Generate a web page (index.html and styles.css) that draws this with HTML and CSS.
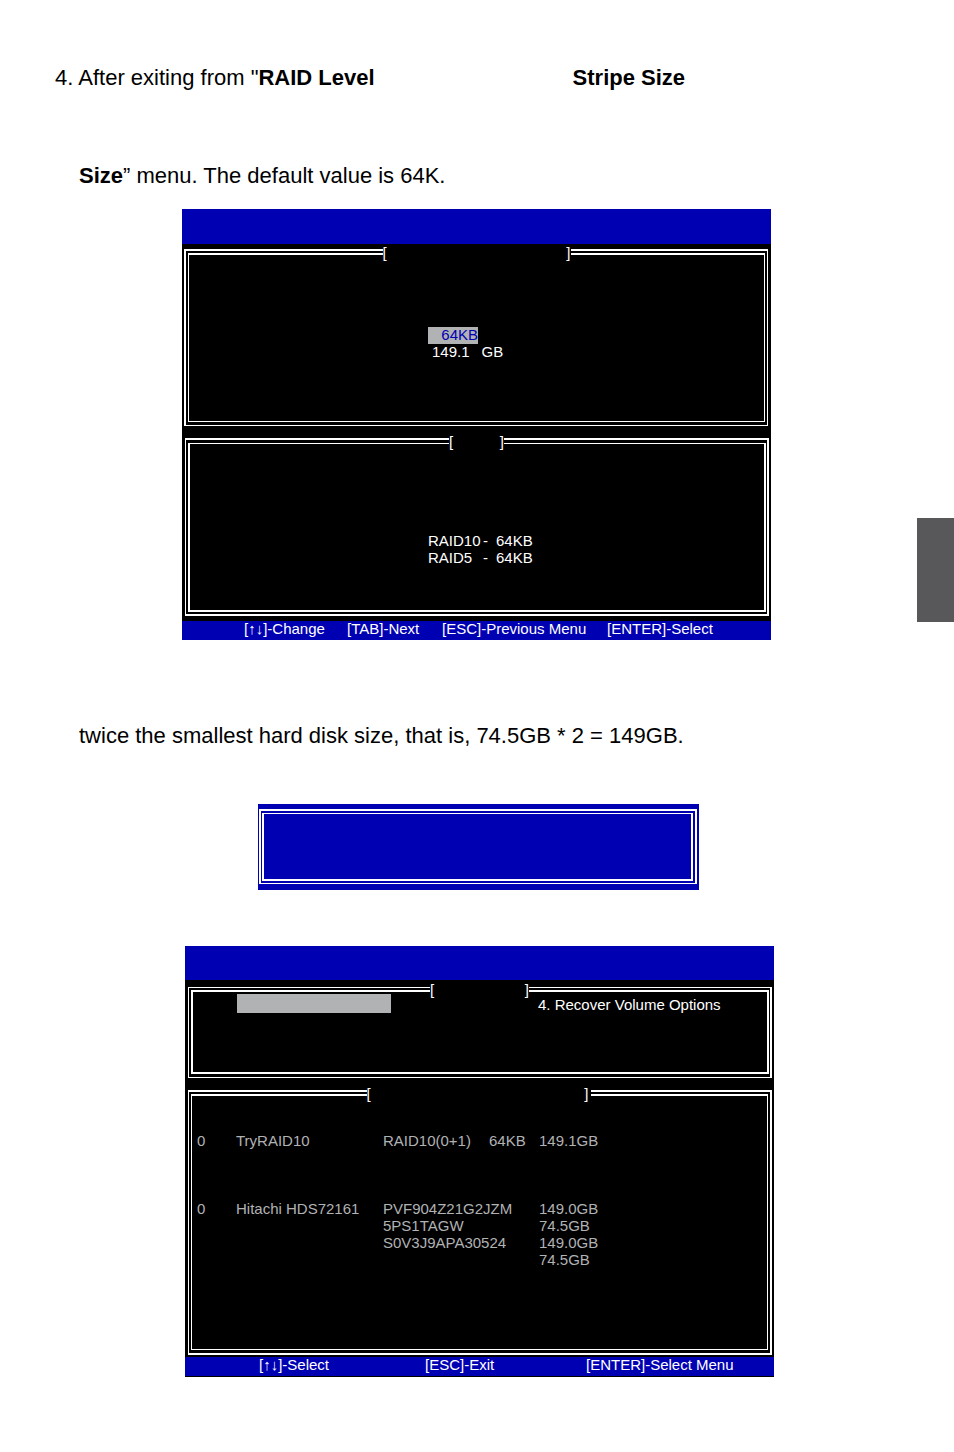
FILE: index.html
```html
<!DOCTYPE html>
<html lang="en">
<head>
  <meta charset="UTF-8">
  <title>RAID Stripe Size</title>
  <link rel="stylesheet" href="styles.css">
</head>
<body>
  <main class="page">
    <p class="step">4. After exiting from "<b>RAID Level</b><b class="menu-name">Stripe Size</b></p>
    <p class="step continued"><b>Size</b>” menu. The default value is 64K.</p>

    <section class="screen">
      <div class="screen-header"></div>
      <div class="frame create">
        <div class="caption"><span>[</span><span>]</span></div>
        <div class="inner">
          <div class="field selected">64KB</div>
          <div class="field"><span>149.1</span><span>GB</span></div>
        </div>
      </div>
      <div class="frame help">
        <div class="caption"><span>[</span><span>]</span></div>
        <div class="inner">
          <div class="level"><span>RAID10</span><span>-</span><span>64KB</span></div>
          <div class="level"><span>RAID5</span><span>-</span><span>64KB</span></div>
        </div>
      </div>
      <div class="keys keys-change">
        <span>[↑↓]-Change</span>
        <span>[TAB]-Next</span>
        <span>[ESC]-Previous Menu</span>
        <span>[ENTER]-Select</span>
      </div>
    </section>

    <p class="step note">twice the smallest hard disk size, that is, 74.5GB * 2 = 149GB.</p>

    <div class="popup-row">
      <div class="popup">
        <div class="frame confirm">
          <div class="inner"></div>
        </div>
      </div>
    </div>

    <div class="main-row">
      <section class="screen main-screen">
        <div class="screen-header"></div>
        <div class="frame main-menu">
          <div class="caption"><span>[</span><span>]</span></div>
          <div class="inner">
            <span class="highlight"></span>
            <span>4. Recover Volume Options</span>
          </div>
        </div>
        <div class="frame volumes">
          <div class="caption"><span>[</span><span>]</span></div>
          <div class="inner">
            <table>
              <colgroup>
                <col class="col-id">
                <col class="col-name">
                <col class="col-level">
                <col class="col-strip">
                <col>
              </colgroup>
              <tr><td>0</td><td>TryRAID10</td><td>RAID10(0+1)</td><td>64KB</td><td>149.1GB</td></tr>
            </table>
            <table>
              <colgroup>
                <col class="col-id">
                <col class="col-name">
                <col class="col-serial">
                <col>
              </colgroup>
              <tr><td>0</td><td>Hitachi HDS72161</td><td>PVF904Z21G2JZM</td><td>149.0GB</td></tr>
              <tr><td></td><td></td><td>5PS1TAGW</td><td>74.5GB</td></tr>
              <tr><td></td><td></td><td>S0V3J9APA30524</td><td>149.0GB</td></tr>
              <tr><td></td><td></td><td></td><td>74.5GB</td></tr>
            </table>
          </div>
        </div>
        <div class="keys keys-select">
          <span>[↑↓]-Select</span>
          <span>[ESC]-Exit</span>
          <span>[ENTER]-Select Menu</span>
        </div>
      </section>
    </div>
  </main>
  <div class="side-tab"></div>
</body>
</html>
```
FILE: styles.css
```css
* {
  box-sizing: border-box;
}
body {
  position: relative;
  margin: 0;
  background: #fff;
  color: #000;
  font-family: "Liberation Sans", Arial, sans-serif;
}
.page {
  padding: 61px 56px 75px 55px;
}
.step {
  margin: 0;
  font-size: 22px;
  line-height: 33px;
}
.menu-name {
  padding-left: 198px;
}
.continued {
  margin: 65px 0 17px;
  padding-left: 24px;
}
.note {
  margin: 79px 0 52px;
  padding-left: 24px;
}

/* BIOS screens */
.screen {
  max-width: 589px;
  margin: 0 auto;
  background: #000;
  color: #fff;
  font-size: 15px;
  line-height: 17px;
}
.screen-header {
  height: 35px;
  background: #0000b3;
}
.main-row {
  padding-left: 6px;
}
.main-screen {
  padding-bottom: 1px;
}
.main-screen .screen-header {
  height: 34px;
}

/* double line frames */
.frame {
  position: relative;
  border: 2px solid #fff;
  padding: 2px;
}
.inner {
  border: 1px solid #fff;
}
.caption {
  position: absolute;
  top: -7px;
  left: 0;
  right: 0;
  margin: 0 auto;
  display: flex;
  justify-content: space-between;
  background: #000;
}

.create {
  margin: 5px 3px 12px 2px;
  border-width: 2px 1px 1px 2px;
  padding: 2px 2px 3px;
}
.create .inner {
  border-top-width: 2px;
  padding: 72px 0 60px 239px;
}
.create .caption {
  width: 188px;
}
.field {
  display: flex;
  gap: 12px;
  padding: 0 0 2px 4px;
  line-height: 15px;
}
.selected {
  width: 50px;
  justify-content: flex-end;
  background: #b1b2b4;
  color: #0000b3;
}

.help {
  margin: 0 2px 5px 3px;
  border-left-width: 1px;
  padding: 3px 1px 2px 2px;
}
.help .inner {
  border-width: 1px 2px 2px;
  padding: 88px 0 44px 238px;
}
.help .caption {
  width: 55px;
}
.level {
  display: grid;
  grid-template-columns: 55px 13px auto;
}

.keys {
  display: grid;
  padding-bottom: 4px;
  background: #0000b3;
  line-height: 15px;
}
.keys-change {
  grid-template-columns: 103px 95px 165px auto;
  padding-left: 62px;
}
.keys-select {
  grid-template-columns: 166px 161px auto;
  padding-left: 74px;
}

.popup-row {
  padding-left: 4px;
}
.popup {
  max-width: 441px;
  margin: 0 auto 56px;
  padding: 5px 2px 6px 1px;
  background: #0000b3;
}
.confirm {
  border-bottom-width: 1px;
  padding: 2px 2px 2px 1px;
}
.confirm .inner {
  border-width: 1px 2px 2px;
  padding: 32px 0 33px;
}

.main-menu {
  margin: 7px 2px 12px 3px;
  border-width: 1px 2px 1px 1px;
  padding: 2px 1px 3px 2px;
}
.main-menu .inner {
  display: flex;
  align-items: flex-end;
  gap: 147px;
  border-width: 2px;
  padding: 2px 0 59px 44px;
}
.main-menu .caption {
  width: 99px;
}
.highlight {
  width: 154px;
  height: 19px;
  background: #b1b2b4;
}

.volumes {
  margin: 0 2px 2px 3px;
  border-left-width: 1px;
  padding: 2px 2px 3px;
}
.volumes .inner {
  border-top-width: 2px;
  padding: 36px 0 81px 5px;
  color: #b1b2b4;
}
.volumes .caption {
  right: 2px;
  width: 224px;
  padding-right: 2px;
}
table {
  width: 100%;
  table-layout: fixed;
  border-collapse: collapse;
}
table + table {
  margin-top: 51px;
}
td {
  height: 17px;
  padding: 0;
  white-space: nowrap;
}
.col-id {
  width: 39px;
}
.col-name {
  width: 147px;
}
.col-level {
  width: 106px;
}
.col-strip {
  width: 50px;
}
.col-serial {
  width: 156px;
}

/* chapter marker on the page edge */
.side-tab {
  position: absolute;
  top: 518px;
  right: 0;
  width: 37px;
  height: 104px;
  background: #58585a;
}
```
